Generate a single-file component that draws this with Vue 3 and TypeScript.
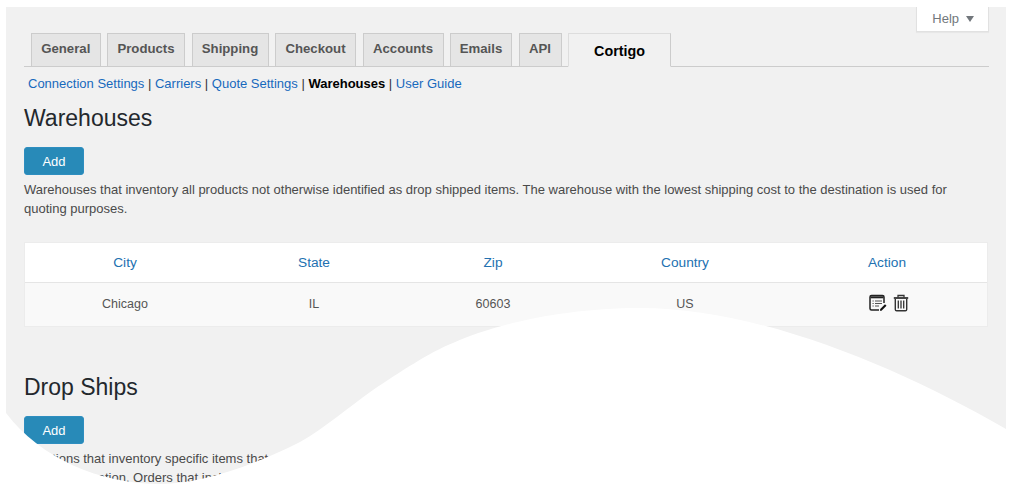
<script setup lang="ts">
const tabs = [
  { label: 'General', width: 69.5 },
  { label: 'Products', width: 78 },
  { label: 'Shipping', width: 77 },
  { label: 'Checkout', width: 81 },
  { label: 'Accounts', width: 81 },
  { label: 'Emails', width: 62 },
  { label: 'API', width: 43 },
]
const subs = ['Connection Settings', 'Carriers', 'Quote Settings']
const columns = ['City', 'State', 'Zip', 'Country', 'Action']
const row = ['Chicago', 'IL', '60603', 'US']
</script>

<template>
  <div class="stage">
    <main class="panel">
      <button class="help">Help <span class="caret"></span></button>
      <nav class="tabs">
        <a v-for="t in tabs" :key="t.label" class="tab" :style="{ width: t.width + 'px' }">{{ t.label }}</a>
        <a class="tab active">Cortigo</a>
      </nav>
      <p class="subnav">
        <template v-for="s in subs" :key="s"><a>{{ s }}</a> | </template><b>Warehouses</b> | <a>User Guide</a>
      </p>
      <h2 class="title first">Warehouses</h2>
      <button class="add">Add</button>
      <p class="desc">Warehouses that inventory all products not otherwise identified as drop shipped items. The warehouse with the lowest shipping cost to the destination is used for quoting purposes.</p>
      <div class="table">
        <div class="tr head">
          <a v-for="c in columns" :key="c" class="cell">{{ c }}</a>
        </div>
        <div class="tr body">
          <span v-for="c in row" :key="c" class="cell">{{ c }}</span>
          <span class="cell actions">
            <svg width="18" height="18" viewBox="0 0 18 18" fill="none" stroke="#222">
              <path d="M15 9V3A1.500 1.500 0 0 0 13.500 1.500h-11A1.500 1.500 0 0 0 1 3v11.500A1.500 1.500 0 0 0 2.500 16H10" stroke-width="1.500" />
              <path d="M1.500 3.300h13" stroke-width="2" />
              <path d="M6 7h7M6 9.500h7M6 12h4M3.500 7h1.200M3.500 9.500h1.200M3.500 12h1.200" stroke-width="1.200" stroke="#555" />
              <path d="M11 15.300l5-5 1.500 1.500-5 5H11z" fill="#111" stroke="none" />
            </svg>
            <svg width="16" height="18" viewBox="0 0 16 18" fill="none" stroke="#333">
              <path d="M.8 4h14.400" stroke-width="1.800" />
              <path d="M5 3.500V1.500h6v2" stroke-width="1.300" />
              <path d="M2.300 5v10.500a1.300 1.300 0 0 0 1.300 1.300h8.800a1.300 1.300 0 0 0 1.300-1.300V5" stroke-width="1.400" />
              <path d="M5.300 6.500v8M8 6.500v8M10.700 6.500v8" stroke-width="1.300" />
            </svg>
          </span>
        </div>
      </div>
      <h2 class="title second">Drop Ships</h2>
      <button class="add">Add</button>
      <p class="desc">Locations that inventory specific items that are drop shipped from a<br />drop ship location. Orders that include drop shipped items are quoted separately.</p>
    </main>
    <svg class="wave" width="1011" height="494" viewBox="0 0 1011 494" aria-hidden="true">
      <path d="M0 405L6 413C40 458 100 484 160 484C200 484 250 467 300 442C325 428 350 406 373 390C400 372 430 352 453 343C490 326 560 308 640 308C760 308 900 368 1006 429L1011 432V494H0Z" fill="#fff" />
    </svg>
  </div>
</template>

<style>
html, body { margin: 0; background: #fff; }
</style>

<style scoped>
.stage {
  position: relative;
  width: 1011px;
  height: 494px;
  overflow: hidden;
  background: #fff;
  padding-top: 7px;
  box-sizing: border-box;
  font-family: "Liberation Sans", Arial, sans-serif;
}
.panel {
  position: relative;
  margin-left: 6px;
  width: 1000px;
  height: 487px;
  box-sizing: border-box;
  padding: 26px 17px 0 18px;
  background: #f1f1f1;
  color: #444;
  font-size: 13px;
}
.help {
  position: absolute;
  top: 0;
  right: 17px;
  width: 73px;
  height: 25px;
  padding: 0 0 2px 1px;
  border: 1px solid #e1e1e1;
  border-top: 0;
  background: #fff;
  box-shadow: 0 1px 1px rgba(0, 0, 0, 0.04);
  color: #72777c;
  font: 13px "Liberation Sans", Arial, sans-serif;
}
.caret {
  display: inline-block;
  margin-left: 3px;
  vertical-align: 1px;
  border-left: 4px solid transparent;
  border-right: 4px solid transparent;
  border-top: 6px solid #72777c;
}
.tabs {
  display: flex;
  align-items: flex-end;
  gap: 6.5px;
  height: 34px;
  padding-left: 7px;
  box-sizing: border-box;
  border-bottom: 1px solid #ccc;
}
.tab {
  box-sizing: border-box;
  height: 34px;
  margin-bottom: -1px;
  padding: 6px 0 0;
  border: 1px solid #ccc;
  background: #e5e5e5;
  color: #555;
  font-size: 13.2px;
  font-weight: 700;
  line-height: 18px;
  white-space: nowrap;
  text-align: center;
}
.tab.active {
  width: 103px;
  padding: 8px 0 0;
  border-color: #ddd #ccc #f1f1f1 #ddd;
  background: #f1f1f1;
  color: #000;
  font-size: 14.3px;
}
.subnav {
  margin: 8px 0 0 4px;
  line-height: 17px;
  color: #333;
  white-space: nowrap;
}
.subnav a { color: #1769bd; }
.subnav b { color: #000; }
.title {
  margin: 0;
  color: #23282d;
  font-size: 23px;
  font-weight: 400;
  line-height: 29px;
}
.title.first { margin-top: 12px; margin-bottom: 14px; }
.title.second { margin-top: 46px; margin-bottom: 14px; }
.add {
  display: block;
  width: 60px;
  height: 28px;
  padding: 0;
  border: 1px solid #2e8ec0;
  border-radius: 3px;
  background: #288ab8;
  color: #fff;
  font: 13px "Liberation Sans", Arial, sans-serif;
}
.desc {
  margin: 5px 0 0;
  line-height: 19px;
  color: #4a4a4a;
  width: 964px;
}
.table {
  margin-top: 24px;
  width: 964px;
  border: 1px solid #ececec;
  box-sizing: border-box;
}
.tr {
  display: grid;
  grid-template-columns: 200px 178px 180px 204px 200px;
  align-items: center;
  text-align: center;
}
.head {
  height: 39px;
  background: #fff;
  border-bottom: 1px solid #e5e5e5;
  font-size: 13.7px;
  color: #2271b1;
}
.body {
  height: 41px;
  padding-bottom: 2px;
  background: #f9f9f9;
  color: #555;
  font-size: 12.5px;
}
.actions {
  display: flex;
  justify-content: center;
  align-items: center;
  gap: 6px;
  margin-top: -2px;
  padding-left: 4px;
}
.wave {
  position: absolute;
  inset: 0;
}
</style>
